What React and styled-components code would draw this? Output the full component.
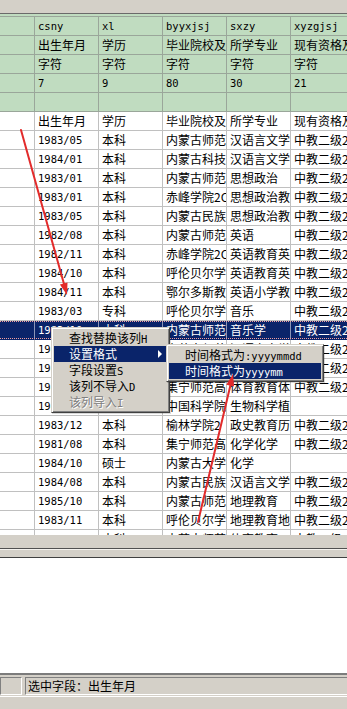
import React from "react"
import styled, { createGlobalStyle, css } from "styled-components"

const GlobalStyle = createGlobalStyle`
  html, body {
    margin: 0;
    padding: 0;
    background: #fff;
  }
  body {
    font-family: "Noto Sans CJK SC", "Liberation Sans", sans-serif;
    font-size: 12px;
    color: #000;
  }
`

const COLS = "35px 64px 64px 64px 64px 64px"
const MONO = `"DejaVu Sans Mono", "Liberation Mono", monospace`

const Page = styled.div`
  position: relative;
  width: 347px;
  height: 709px;
  overflow: hidden;
  display: flex;
  flex-direction: column;
  background: #fff;
`

const TopBar = styled.div`
  flex: none;
  height: 13px;
  background: #d4d0c8;
  border-bottom: 1px solid #6a6a6a;
`

const GridView = styled.div`
  flex: none;
  height: 521px;
  overflow: hidden;
  background: #fff;
`

const HeadBlock = styled.div`
  background: #c0dcc0;
  padding-top: 2px;
  & > div:first-child {
    border-top: 1px solid #9aa69a;
  }
`

const Row = styled.div`
  position: relative;
  display: grid;
  grid-template-columns: ${COLS};
  width: 355px;
  background: ${(p) => (p.$selected ? "#0a246a" : "transparent")};
  color: ${(p) => (p.$selected ? "#fff" : "#000")};

  ${(p) =>
    p.$selected &&
    css`
      &::after {
        content: "";
        position: absolute;
        inset: 0 0 1px 0;
        border-top: 1px dotted #f0a0a0;
        border-bottom: 1px dotted #f0a0a0;
        pointer-events: none;
      }
    `}
`

const Cell = styled.div`
  height: 19px;
  box-sizing: border-box;
  padding-left: 3px;
  line-height: 18px;
  white-space: nowrap;
  overflow: hidden;
  border-right: 1px solid ${(p) => (p.$head ? "#9aa69a" : p.$selected ? "#8a96b8" : "#c0c0c0")};
  border-bottom: 1px solid ${(p) => (p.$head ? "#9aa69a" : p.$selected ? "#0a246a" : "#c0c0c0")};
  font-family: ${(p) => (p.$mono ? MONO : `"Noto Sans CJK SC", sans-serif`)};
  font-size: ${(p) => (p.$mono ? "10.5px" : "12px")};
`

const Latin = styled.span`
  font-family: ${MONO};
  font-size: 10.5px;
`

const Splitter = styled.div`
  flex: none;
  height: 13px;
  background: #d4d0c8;
  border-bottom: 1px solid #505050;
`

const SplitBand = styled.div`
  flex: none;
  height: 7px;
  background: #d4d0c8;
  border-top: 1px solid #f4f2ee;
  border-bottom: 1px solid #404040;
`

const Blank = styled.div`
  flex: 1;
  background: #fff;
`

const StatusBar = styled.div`
  flex: none;
  height: 23px;
  box-sizing: border-box;
  border-top: 2px solid #7c7c7c;
  background: #d4d0c8;
  display: flex;
  gap: 3px;
  padding: 2px 0 1px;
`

const StatusPanel = styled.div`
  flex: ${(p) => (p.$grow ? 1 : "none")};
  width: ${(p) => (p.$grow ? "auto" : "22px")};
  box-sizing: border-box;
  border-top: 1px solid #808080;
  border-left: 1px solid #808080;
  border-bottom: 1px solid #fff;
  border-right: ${(p) => (p.$grow ? "none" : "1px solid #fff")};
  padding-left: 2px;
  line-height: 16px;
  font-size: 12px;
  white-space: nowrap;
`

const BottomStrip = styled.div`
  flex: none;
  height: 12px;
  background: #d4d0c8;
  border-top: 1px solid #fff;
`

const Menu = styled.div`
  position: absolute;
  left: ${(p) => p.$x}px;
  top: ${(p) => p.$y}px;
  width: ${(p) => p.$w}px;
  box-sizing: border-box;
  background: #d4d0c8;
  border: 1px solid;
  border-color: #d4d0c8 #404040 #404040 #d4d0c8;
  box-shadow: inset 1px 1px #fff, inset -1px -1px #808080, 1px 1px 0 rgba(0, 0, 0, 0.15);
  padding: 2px;
  z-index: 2;
`

const MenuItem = styled.div`
  position: relative;
  height: 16px;
  line-height: 16px;
  padding-left: ${(p) => p.$indent}px;
  white-space: nowrap;
  font-size: 12px;
  background: ${(p) => (p.$active ? "#0a246a" : "transparent")};
  color: ${(p) => (p.$disabled ? "#808080" : p.$active ? "#fff" : "#000")};
  text-shadow: ${(p) => (p.$disabled ? "1px 1px 0 #fff" : "none")};
`

const SubArrow = styled.span`
  position: absolute;
  right: 5px;
  top: 4px;
  width: 0;
  height: 0;
  border-top: 4px solid transparent;
  border-bottom: 4px solid transparent;
  border-left: 4px solid currentColor;
`

const ArrowLayer = styled.svg`
  position: absolute;
  left: 0;
  top: 0;
  pointer-events: none;
  z-index: 3;
`

const headRows = [
  { mono: true, cells: ["", "csny", "xl", "byyxjsj", "sxzy", "xyzgjsj"] },
  { cells: ["", "出生年月", "学历", "毕业院校及", "所学专业", "现有资格及"] },
  { cells: ["", "字符", "字符", "字符", "字符", "字符"] },
  { mono: true, cells: ["", "7", "9", "80", "30", "21"] },
  { cells: ["", "", "", "", "", ""] },
]

const data = [
  ["出生年月", "学历", "毕业院校及", "所学专业", "现有资格及"],
  ["1983/05", "本科", "内蒙古师范", "汉语言文学", "中教二级2"],
  ["1984/01", "本科", "内蒙古科技", "汉语言文学", "中教二级2"],
  ["1983/01", "本科", "内蒙古师范", "思想政治", "中教二级2"],
  ["1983/01", "本科", "赤峰学院2C", "思想政治教", "中教二级2"],
  ["1983/05", "本科", "内蒙古民族", "思想政治教", "中教二级2"],
  ["1982/08", "本科", "内蒙古师范", "英语", "中教二级2"],
  ["1982/11", "本科", "赤峰学院2C", "英语教育英", "中教二级2"],
  ["1984/10", "本科", "呼伦贝尔学", "英语教育英", "中教二级2"],
  ["1984/11", "本科", "鄂尔多斯教", "英语小学教", "中教二级2"],
  ["1983/03", "专科", "呼伦贝尔学", "音乐", "中教二级2"],
  ["1983/10", "本科", "内蒙古师范", "音乐学", "中教二级2"],
  ["1983/09", "本科", "内蒙古师范", "汉语言文学", "中教二级2"],
  ["1984/03", "本科", "内蒙古民族", "数学与应用", "中教二级2"],
  ["1982/07", "本科", "集宁师范高", "体育教育体", "中教二级2"],
  ["1983/06", "本科", "中国科学院", "生物科学植", ""],
  ["1983/12", "本科", "榆林学院2", "政史教育历", "中教二级2"],
  ["1981/08", "本科", "集宁师范高", "化学化学", "中教二级2"],
  ["1984/10", "硕士", "内蒙古大学", "化学", ""],
  ["1984/08", "本科", "内蒙古民族", "汉语言文学", "中教二级2"],
  ["1985/10", "本科", "内蒙古师范", "地理教育", "中教二级2"],
  ["1983/11", "本科", "呼伦贝尔学", "地理教育地", "中教二级2"],
  ["1984/05", "本科", "内蒙古师范", "体育教育", "中教二级2"],
]

const SELECTED = 11

const isLatin = (s) => /^[0-9/]+$/.test(s)

const App = () => (
  <Page>
    <GlobalStyle />
    <TopBar />

    <GridView>
      <HeadBlock>
        {headRows.map((r, i) => (
          <Row key={i}>
            {r.cells.map((c, j) => (
              <Cell key={j} $head $mono={r.mono}>
                {c}
              </Cell>
            ))}
          </Row>
        ))}
      </HeadBlock>

      {data.map((r, i) => {
        const sel = i === SELECTED
        return (
          <Row key={i} $selected={sel}>
            <Cell $selected={sel} />
            {r.map((c, j) => (
              <Cell key={j} $selected={sel} $mono={isLatin(c)}>
                {c}
              </Cell>
            ))}
          </Row>
        )
      })}
    </GridView>

    <Splitter />
    <SplitBand />
    <Blank />

    <StatusBar>
      <StatusPanel />
      <StatusPanel $grow>选中字段：出生年月</StatusPanel>
    </StatusBar>
    <BottomStrip />

    <Menu $x={51} $y={327} $w={119}>
      <MenuItem $indent={15}>
        查找替换该列<Latin>H</Latin>
      </MenuItem>
      <MenuItem $indent={15} $active>
        设置格式
        <SubArrow />
      </MenuItem>
      <MenuItem $indent={15}>
        字段设置<Latin>S</Latin>
      </MenuItem>
      <MenuItem $indent={15}>
        该列不导入<Latin>D</Latin>
      </MenuItem>
      <MenuItem $indent={15} $disabled>
        该列导入<Latin>I</Latin>
      </MenuItem>
    </Menu>

    <Menu $x={166} $y={344} $w={158}>
      <MenuItem $indent={16}>
        时间格式为<Latin>:yyyymmdd</Latin>
      </MenuItem>
      <MenuItem $indent={16} $active>
        时间格式为<Latin>yyyymm</Latin>
      </MenuItem>
    </Menu>

    <ArrowLayer width="347" height="709" viewBox="0 0 347 709">
      <line x1="21" y1="130" x2="64" y2="284" stroke="#e22b2b" strokeWidth="2" strokeLinecap="round" />
      <polygon points="67,295 67.5,282.4 59.9,284.6" fill="#e22b2b" />
      <line x1="198" y1="522" x2="230.5" y2="385" stroke="#e22b2b" strokeWidth="2" strokeLinecap="round" />
      <polygon points="233,374 234.1,386.6 226.3,384.8" fill="#e22b2b" />
    </ArrowLayer>
  </Page>
)

export default App
